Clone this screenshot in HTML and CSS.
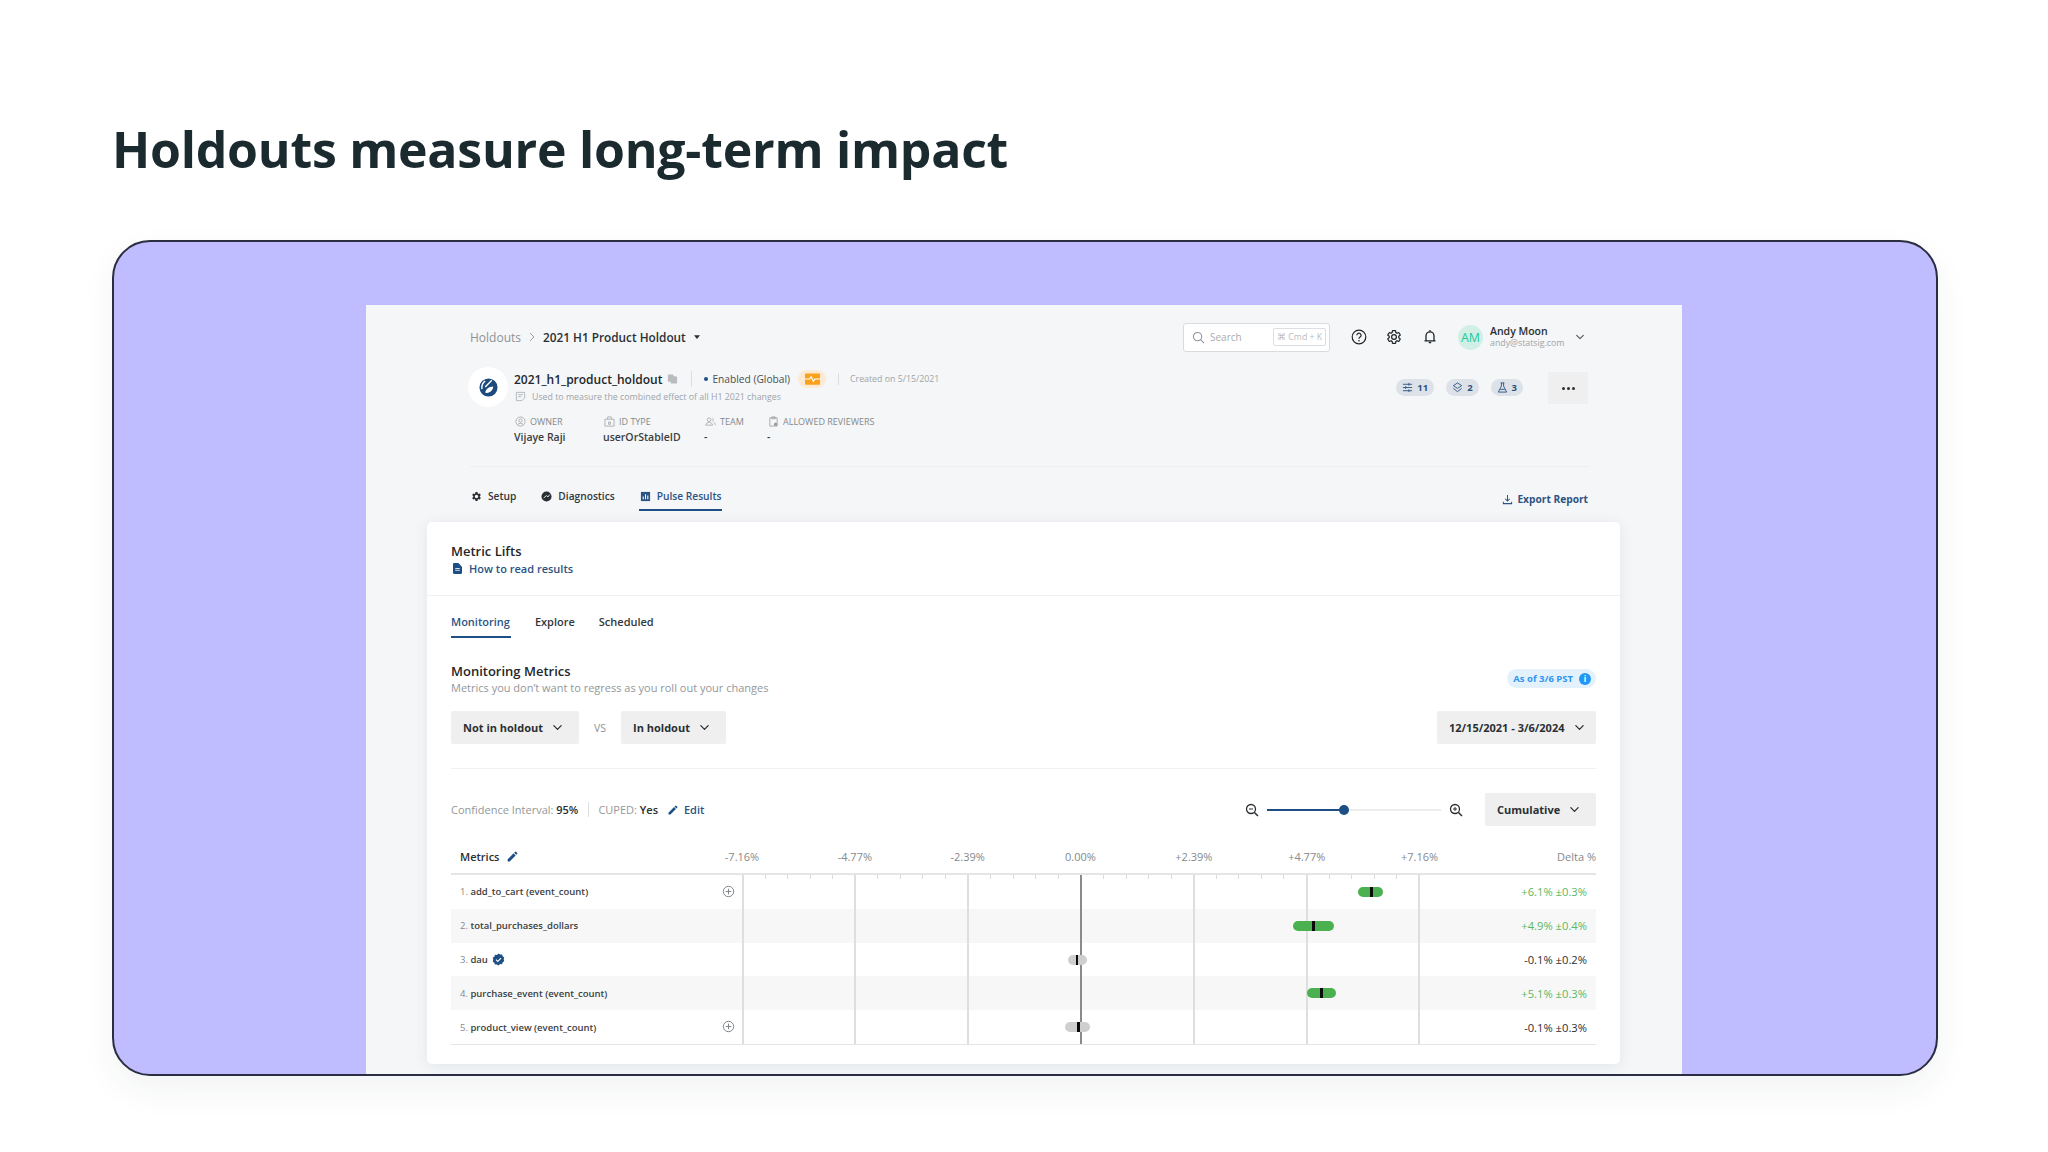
FILE: index.html
```html
<!DOCTYPE html>
<html lang="en">
<head>
<meta charset="utf-8">
<title>Holdouts measure long-term impact</title>
<link rel="stylesheet" href="styles.css">
</head>
<body>
<svg class="sprite" aria-hidden="true">
  <symbol id="chev" viewBox="0 0 12 12"><path d="M2 4l4 4 4-4" fill="none" stroke="currentColor" stroke-width="1.4" stroke-linecap="round" stroke-linejoin="round"/></symbol>
  <symbol id="gear" viewBox="0 0 24 24"><path d="M19.14 12.94c.04-.3.06-.61.06-.94 0-.32-.02-.64-.07-.94l2.03-1.58a.49.49 0 0 0 .12-.61l-1.92-3.32a.488.488 0 0 0-.59-.22l-2.39.96c-.5-.38-1.03-.7-1.62-.94l-.36-2.54a.484.484 0 0 0-.48-.41h-3.84c-.24 0-.43.17-.47.41l-.36 2.54c-.59.24-1.13.57-1.62.94l-2.39-.96c-.22-.08-.47 0-.59.22L2.74 8.87c-.12.21-.08.47.12.61l2.03 1.58c-.05.3-.09.63-.09.94s.02.64.07.94l-2.03 1.58a.49.49 0 0 0-.12.61l1.92 3.32c.12.22.37.29.59.22l2.39-.96c.5.38 1.03.7 1.62.94l.36 2.54c.05.24.24.41.48.41h3.84c.24 0 .44-.17.47-.41l.36-2.54c.59-.24 1.13-.56 1.62-.94l2.39.96c.22.08.47 0 .59-.22l1.92-3.32c.12-.22.07-.47-.12-.61l-2.01-1.58zM12 15.6c-1.98 0-3.6-1.62-3.6-3.6s1.62-3.6 3.6-3.6 3.6 1.62 3.6 3.6-1.62 3.6-3.6 3.6z"/></symbol>
  <symbol id="pencil" viewBox="0 0 24 24"><path d="M3 17.25V21h3.75L17.81 9.94l-3.75-3.75L3 17.25zM20.71 7.04a1 1 0 0 0 0-1.41l-2.34-2.34a1 1 0 0 0-1.41 0l-1.83 1.83 3.75 3.75 1.83-1.83z"/></symbol>
  <symbol id="plus" viewBox="0 0 14 14"><circle cx="7" cy="7" r="5.6" fill="none" stroke="currentColor" stroke-width="1"/><path d="M7 4v6M4 7h6" stroke="currentColor" stroke-width="1"/></symbol>
</svg>
<main class="page">
  <h1 class="title">Holdouts measure long-term impact</h1>
  <section class="frame">
    <div class="panel">
      <header class="topbar">
        <nav class="crumbs">
          <span class="crumb-root">Holdouts</span>
          <svg class="crumb-sep" viewBox="0 0 8 12"><path d="M2 2l4 4-4 4" fill="none" stroke="currentColor" stroke-width="1"/></svg>
          <span class="crumb-here">2021 H1 Product Holdout</span>
          <svg class="crumb-caret" viewBox="0 0 8 5"><path d="M0 0h8L4 5z"/></svg>
        </nav>
        <div class="search">
          <svg class="search-ico" viewBox="0 0 14 14"><circle cx="6" cy="6" r="4.500" fill="none" stroke="currentColor" stroke-width="1.100"/><path d="M9.300 9.300l3.700 3.700" stroke="currentColor" stroke-width="1.100"/></svg>
          <span class="search-text">Search</span>
          <span class="kbd">⌘ Cmd + K</span>
        </div>
        <svg class="top-ico help" viewBox="0 0 16 16"><circle cx="8" cy="8" r="6.800" fill="none" stroke="currentColor" stroke-width="1.200"/><path d="M5.900 6.300a2.100 2.100 0 1 1 3.200 1.800c-.7.500-1.100.8-1.100 1.700" fill="none" stroke="currentColor" stroke-width="1.200"/><circle cx="8" cy="11.700" r=".8" fill="currentColor"/></svg>
        <svg class="top-ico gear-line" viewBox="0 0 24 24"><use href="#gear"/></svg>
        <svg class="top-ico bell" viewBox="0 0 16 16"><path d="M4 11.500V6.800a4 4 0 0 1 8 0v4.700M2.500 11.800h11" fill="none" stroke="currentColor" stroke-width="1.300"/><path d="M6.800 13.500h2.400M8 1v1.500" stroke="currentColor" stroke-width="1.300"/></svg>
        <div class="user">
          <span class="avatar">AM</span>
          <span class="user-text"><b>Andy Moon</b><small>andy@statsig.com</small></span>
          <svg class="user-chev" viewBox="0 0 12 12"><use href="#chev"/></svg>
        </div>
      </header>

      <section class="head">
        <div class="head-main">
          <span class="logo"><svg viewBox="0 0 20 20"><circle cx="10" cy="10" r="9.500" fill="#1d4a7c"/><path d="M6 3.500c-2 1.500-3.200 4-3 7.500M13 3l-6 6" stroke="#fff" stroke-width="1.500" fill="none" stroke-linecap="round"/><path d="M6.500 15.500c.5-3.500 4-6.500 8.500-6.500-.2 3.800-3.500 7.500-8.500 6.500z" fill="#fff"/></svg></span>
          <div class="head-body">
            <div class="head-line">
              <span class="exp-name">2021_h1_product_holdout</span>
              <svg class="copy" viewBox="0 0 12 12"><path d="M1 1h6v2h3l1 1v7H4V9H1z"/></svg>
              <i class="vline first"></i>
              <span class="dot"></span>
              <span class="status">Enabled (Global)</span>
              <span class="pulse"><svg viewBox="0 0 16 12"><rect width="16" height="12" rx="1" fill="#f9a11b"/><path d="M0 6h5l1.500-2.500L9 8.500 10.500 6H16" stroke="#fff" stroke-width="1.100" fill="none"/></svg></span>
              <i class="vline second"></i>
              <span class="created">Created on 5/15/2021</span>
            </div>
            <div class="desc-line">
              <svg class="note" viewBox="0 0 12 12"><path d="M1.500 1.500h9v6l-3 3h-6zM3.500 4h5M3.500 6.200h3.500" fill="none" stroke="currentColor" stroke-width=".8"/></svg>
              <span>Used to measure the combined effect of all H1 2021 changes</span>
            </div>
            <div class="meta">
              <div class="meta-col col-owner">
                <span class="meta-label"><svg viewBox="0 0 12 12"><circle cx="6" cy="6" r="5" fill="none" stroke="currentColor" stroke-width=".8"/><circle cx="6" cy="5" r="1.800" fill="none" stroke="currentColor" stroke-width=".8"/><path d="M2.800 9.500c1.500-2 4.900-2 6.400 0" fill="none" stroke="currentColor" stroke-width=".8"/></svg>OWNER</span>
                <span class="meta-val">Vijaye Raji</span>
              </div>
              <div class="meta-col col-id">
                <span class="meta-label"><svg viewBox="0 0 12 12"><path d="M1 3.500h10V11H1zM4 3.500V1h4v2.500M5 6.500h2v2.500H5z" fill="none" stroke="currentColor" stroke-width=".8"/></svg>ID TYPE</span>
                <span class="meta-val">userOrStableID</span>
              </div>
              <div class="meta-col col-team">
                <span class="meta-label"><svg viewBox="0 0 12 12"><circle cx="4.500" cy="4" r="2" fill="none" stroke="currentColor" stroke-width=".8"/><path d="M.8 10c.5-4 7-4 7.400 0zM8 2.300a2 2 0 0 1 0 3.500M9.500 6.800c1 .5 1.600 1.600 1.700 3.200" fill="none" stroke="currentColor" stroke-width=".8"/></svg>TEAM</span>
                <span class="meta-val">-</span>
              </div>
              <div class="meta-col">
                <span class="meta-label"><svg viewBox="0 0 12 12"><path d="M2 2h8v9H2zM4.200 1h3.600v2H4.200z" fill="none" stroke="currentColor" stroke-width=".9"/><circle cx="8.300" cy="9" r="1.800" fill="currentColor"/></svg>ALLOWED REVIEWERS</span>
                <span class="meta-val">-</span>
              </div>
            </div>
          </div>
        </div>
        <div class="head-side">
          <span class="count"><svg viewBox="0 0 12 12"><path d="M1 2.500h10M1 6h10M1 9.500h10M7.500 1v3M4 4.500v3M7.500 8v3" fill="none" stroke="currentColor" stroke-width="1"/></svg>11</span>
          <span class="count"><svg viewBox="0 0 12 12"><path d="M6 1l4.500 3L6 7 1.500 4zM1.500 7L6 10.500 10.500 7" fill="none" stroke="currentColor" stroke-width="1"/></svg>2</span>
          <span class="count"><svg viewBox="0 0 12 12"><path d="M4 1h4M4.800 1v3.500L1.500 11h9L7.200 4.500V1M3.500 8h5" fill="none" stroke="currentColor" stroke-width="1"/></svg>3</span>
          <span class="more"><i></i><i></i><i></i></span>
        </div>
      </section>

      <nav class="tabs">
        <span class="tab"><svg viewBox="0 0 24 24"><use href="#gear"/></svg>Setup</span>
        <span class="tab"><svg viewBox="0 0 12 12"><circle cx="6" cy="6" r="5.500"/><path d="M3 7.500L6 5l1.500 1.500L9.500 4" stroke="#f4f6f8" fill="none" stroke-width="1"/></svg>Diagnostics</span>
        <span class="tab tab-on"><svg viewBox="0 0 12 12"><path d="M1 1h10v10H1z"/><path d="M3.500 9V6M6 9V3.500M8.500 9V5" stroke="#f4f6f8" stroke-width="1.200"/></svg>Pulse Results</span>
        <span class="export"><svg viewBox="0 0 12 12"><path d="M6 1v6.500M3.500 5.200L6 7.700l2.500-2.500M1.500 8.500v2h9v-2" fill="none" stroke="currentColor" stroke-width="1.100"/></svg>Export Report</span>
      </nav>

      <article class="card">
        <header class="card-head">
          <h2 class="card-title">Metric Lifts</h2>
          <a class="doc-link"><svg viewBox="0 0 10 12"><path d="M0 1.200C0 .5.500 0 1.200 0H6l4 4v6.800c0 .7-.5 1.200-1.200 1.200H1.200C.5 12 0 11.500 0 10.800z"/><path d="M2.500 6h5M2.500 8h5" stroke="#fff" stroke-width=".9"/></svg>How to read results</a>
        </header>
        <div class="card-body">
          <nav class="subtabs">
            <span class="subtab subtab-on">Monitoring</span>
            <span class="subtab">Explore</span>
            <span class="subtab">Scheduled</span>
          </nav>
          <div class="section-head">
            <div>
              <h3 class="section-title">Monitoring Metrics</h3>
              <p class="section-desc">Metrics you don’t want to regress as you roll out your changes</p>
            </div>
            <span class="asof">As of 3/6 PST<i class="info">i</i></span>
          </div>
          <div class="selects">
            <span class="select sel-a">Not in holdout<svg viewBox="0 0 12 12"><use href="#chev"/></svg></span>
            <span class="vs">VS</span>
            <span class="select sel-b">In holdout<svg viewBox="0 0 12 12"><use href="#chev"/></svg></span>
            <span class="select sel-date">12/15/2021 - 3/6/2024<svg viewBox="0 0 12 12"><use href="#chev"/></svg></span>
          </div>
          <div class="controls">
            <span class="ci">Confidence Interval: <b>95%</b></span>
            <i class="ci-sep"></i>
            <span class="ci">CUPED: <b>Yes</b></span>
            <a class="edit"><svg viewBox="0 0 24 24"><use href="#pencil"/></svg>Edit</a>
            <div class="zoomer">
              <svg class="zoom-ico" viewBox="0 0 14 14"><circle cx="6" cy="6" r="4.500" fill="none" stroke="currentColor" stroke-width="1.300"/><path d="M9.500 9.500l3.500 3.500" stroke="currentColor" stroke-width="1.500"/><path d="M4 6h4" stroke="currentColor" stroke-width="1"/></svg>
              <span class="track"><span class="track-fill"></span><span class="knob"></span></span>
              <svg class="zoom-ico" viewBox="0 0 14 14"><circle cx="6" cy="6" r="4.500" fill="none" stroke="currentColor" stroke-width="1.300"/><path d="M9.500 9.500l3.500 3.500" stroke="currentColor" stroke-width="1.500"/><path d="M4 6h4M6 4v4" stroke="currentColor" stroke-width="1"/></svg>
            </div>
            <span class="select sel-cum">Cumulative<svg viewBox="0 0 12 12"><use href="#chev"/></svg></span>
          </div>

          <div class="table">
            <div class="thead">
              <span class="th-metrics">Metrics<svg viewBox="0 0 24 24"><use href="#pencil"/></svg></span>
              <div class="axis">
                <span>-7.16%</span><span>-4.77%</span><span>-2.39%</span><span>0.00%</span><span>+2.39%</span><span>+4.77%</span><span>+7.16%</span>
              </div>
              <span class="th-delta">Delta %</span>
            </div>
            <div class="tbody">
              <div class="row">
                <span class="metric"><em>1.</em> add_to_cart (event_count)<svg class="add" viewBox="0 0 14 14"><use href="#plus"/></svg></span>
                <div class="lane"><span class="ci-bar up" style="left:616px;width:25px"><i style="left:12px"></i></span></div>
                <span class="delta pos">+6.1% ±0.3%</span>
              </div>
              <div class="row">
                <span class="metric"><em>2.</em> total_purchases_dollars</span>
                <div class="lane"><span class="ci-bar up" style="left:550.500px;width:41px"><i style="left:19.500px"></i></span></div>
                <span class="delta pos">+4.9% ±0.4%</span>
              </div>
              <div class="row">
                <span class="metric"><em>3.</em> dau<svg class="verified" viewBox="0 0 14 14"><path d="M7 .5l1.700 1.200 2.100-.1.700 2 1.700 1.200-.6 2 .6 2-1.700 1.200-.7 2-2.100-.1L7 13.500l-1.700-1.200-2.100.1-.7-2L.8 9.200l.6-2-.6-2 1.700-1.200.7-2 2.100.1z" fill="#1d4f85"/><path d="M4.300 7.200l1.900 1.800 3.500-3.600" fill="none" stroke="#fff" stroke-width="1.200"/></svg></span>
                <div class="lane"><span class="ci-bar flat" style="left:325.500px;width:19px"><i style="left:8px"></i></span></div>
                <span class="delta">-0.1% ±0.2%</span>
              </div>
              <div class="row">
                <span class="metric"><em>4.</em> purchase_event (event_count)</span>
                <div class="lane"><span class="ci-bar up" style="left:565px;width:28.500px"><i style="left:13px"></i></span></div>
                <span class="delta pos">+5.1% ±0.3%</span>
              </div>
              <div class="row">
                <span class="metric"><em>5.</em> product_view (event_count)<svg class="add" viewBox="0 0 14 14"><use href="#plus"/></svg></span>
                <div class="lane"><span class="ci-bar flat" style="left:323px;width:25px"><i style="left:12px"></i></span></div>
                <span class="delta">-0.1% ±0.3%</span>
              </div>
              <div class="plot">
                <i></i><i></i><i></i><i class="zero"></i><i></i><i></i><i></i>
              </div>
            </div>
          </div>
        </div>
      </article>
    </div>
  </section>
</main>
</body>
</html>
```

FILE: styles.css
```css
* { box-sizing: border-box; }
html, body { margin: 0; padding: 0; background: #fff; }
body { font-family: "Open Sans", "Liberation Sans", sans-serif; color: #2b2f33; }
svg { display: block; flex: none; }
i, em { font-style: normal; }
h1, h2, h3, p { margin: 0; }
.sprite { display: none; }

.page { width: 2048px; height: 1152px; overflow: hidden; padding: 0 110px 0 112px; }
.title { height: 240px; padding: 116px 0 0; font-size: 50px; letter-spacing: -.25px; line-height: 66px; font-weight: 700; color: #1b2a2e; }

.frame { height: 836px; border: 2px solid #2b2e40; border-radius: 38px; background: #bfbcff; padding-top: 63px; display: flex; flex-direction: column; overflow: hidden; box-shadow: 0 14px 34px rgba(40, 50, 60, .06); }
.panel { flex: 1; width: 1316px; margin: 0 auto 0 252px; background: #f4f6f8; padding: 0 62px 0 61px; overflow: hidden; }

.topbar { height: 65px; margin: 0 28px 0 43px; display: flex; align-items: center; padding-bottom: 1px; }
.crumbs { display: flex; align-items: center; font-size: 12px; flex: 1; }
.crumb-root { color: #8f9397; }
.crumb-sep { width: 8px; height: 12px; margin: 0 7px; color: #9a9da0; }
.crumb-here { font-size: 11.800px; font-weight: 600; color: #2b2f33; }
.crumb-caret { width: 6px; height: 4px; margin-left: 8px; fill: #2b2f33; }

.search { width: 147px; height: 29px; background: #fff; border: 1px solid #d9dcdf; border-radius: 3px; display: flex; align-items: center; padding: 0 3px 0 8px; font-size: 10px; color: #a9adb0; margin-right: 21px; }
.search-ico { width: 13px; height: 13px; color: #8f9397; margin-right: 5px; }
.search-text { flex: 1; }
.kbd { font-size: 8.700px; border: 1px solid #dcdfe1; border-radius: 2px; padding: 2px 3px; color: #b9bcbe; white-space: nowrap; }
.top-ico { width: 16px; height: 16px; color: #1f2427; }
.help { margin-right: 19px; }
.gear-line { fill: none; stroke: #1f2427; stroke-width: 1.800px; margin-right: 20px; }
.bell { margin-right: 20px; }
.user { display: flex; align-items: center; }
.avatar { width: 25px; height: 25px; border-radius: 50%; background: #d2efe6; color: #1fc79a; font-size: 12.500px; display: flex; align-items: center; justify-content: center; margin-right: 7px; }
.user-text { display: flex; flex-direction: column; line-height: 12px; width: 85px; }
.user-text b { font-size: 10.500px; font-weight: 600; }
.user-text small { font-size: 8.800px; color: #a1a5a8; }
.user-chev { width: 10px; height: 10px; color: #565a5e; margin-right: 7px; }

.head { margin: 1px 30px 0 43px; padding-bottom: 21px; border-bottom: 1px solid #eceef0; display: flex; justify-content: space-between; }
.head-main { display: flex; }
.logo { width: 40px; height: 40px; margin: -4px 6px 0 -2px; border-radius: 50%; background: #fff; display: flex; align-items: center; justify-content: center; }
.logo svg { width: 19px; height: 19px; }
.head-line { height: 18px; display: flex; align-items: center; margin-top: -1px; }
.exp-name { font-size: 12px; font-weight: 600; color: #23272a; }
.copy { width: 11px; height: 12px; fill: #b9bcbe; margin-left: 5px; }
.vline { width: 1px; height: 16px; background: #dcdfe1; }
.vline.first { margin: 0 12px 0 13px; }
.vline.second { height: 12px; margin: 0 11px 0 12px; }
.dot { width: 4px; height: 4px; border-radius: 50%; background: #1d4f85; margin-right: 4px; }
.status { font-size: 10.200px; color: #4a4e52; }
.pulse { width: 28px; height: 18px; border-radius: 9px; background: #fcebd2; display: flex; align-items: center; justify-content: center; margin-left: 8px; }
.pulse svg { width: 15px; height: 12px; }
.created { font-size: 8.800px; color: #a1a5a8; }
.desc-line { height: 17px; display: flex; align-items: center; font-size: 8.800px; color: #a1a5a8; }
.note { width: 11px; height: 11px; margin: 0 6px 0 1px; }
.meta { display: flex; margin-top: 9px; }
.meta-col { display: flex; flex-direction: column; }
.col-owner { width: 89px; }
.col-id { width: 101px; }
.col-team { width: 63px; }
.meta-label { height: 14px; display: flex; align-items: center; font-size: 9px; color: #85898c; padding-left: 1px; }
.meta-label svg { width: 11px; height: 11px; margin-right: 4px; color: #9b9ea1; }
.meta-val { height: 16px; margin-top: 1px; font-size: 10.500px; line-height: 16px; font-weight: 600; color: #3a3e42; }
.head-side { display: flex; align-items: flex-start; padding-right: 2px; }
.count { height: 17px; margin: 8px 12px 0 0; padding: 0 6px; border-radius: 9px; background: #dde2e9; display: flex; align-items: center; font-size: 9.500px; font-weight: 700; color: #2c5384; }
.count svg { width: 11px; height: 11px; margin-right: 4px; }
.more { width: 40px; height: 32px; margin: 1px 0 0 13px; background: #efefef; border-radius: 2px; display: flex; align-items: center; justify-content: center; gap: 2px; }
.more i { width: 3px; height: 3px; border-radius: 50%; background: #2b2f33; }

.tabs { height: 55px; margin: 0 32px 0 43px; display: flex; align-items: flex-start; padding-top: 19px; font-size: 10.200px; }
.tab { height: 25px; padding: 0 1px 3px 1px; margin-right: 23px; display: flex; align-items: center; border-bottom: 2px solid transparent; font-weight: 600; color: #33373b; }
.tab svg { width: 11px; height: 11px; margin-right: 6px; fill: #2b2f33; }
.tab-on { color: #2c5384; border-bottom-color: #1d4f85; margin-right: 0; }
.tab-on svg { fill: #2c5384; }
.export { margin: 6px 0 0 auto; display: flex; align-items: center; font-weight: 700; color: #2c5384; }
.export svg { width: 11px; height: 11px; margin-right: 4px; }

.card { background: #fff; border-radius: 5px; height: 542px; box-shadow: 0 2px 14px rgba(60, 70, 80, .09); }
.card-head { height: 74px; padding: 20px 24px 0; border-bottom: 1px solid #eef0f1; }
.card-title { font-size: 13px; line-height: 18px; font-weight: 600; color: #23272a; }
.doc-link { height: 16px; display: flex; align-items: center; font-size: 11px; font-weight: 600; color: #2c5384; padding-left: 2px; }
.doc-link svg { width: 9px; height: 11px; margin-right: 7px; fill: #1d4f85; }
.card-body { padding: 0 24px; }

.subtabs { display: flex; gap: 24px; padding-top: 17px; font-size: 11px; }
.subtab { height: 25px; line-height: 18px; font-weight: 600; color: #33373b; }
.subtab-on { color: #2c5384; border-bottom: 2px solid #1d4f85; padding: 0 1px 5px 0; }

.section-head { margin-top: 24px; height: 34px; display: flex; justify-content: space-between; align-items: flex-start; }
.section-title { font-size: 13px; line-height: 18px; font-weight: 600; color: #23272a; }
.section-desc { font-size: 11px; line-height: 16px; color: #93979a; }
.asof { margin-top: 7px; height: 19px; padding: 0 5px 0 6px; border-radius: 10px; background: #e3f1fd; display: flex; align-items: center; font-size: 9.500px; font-weight: 700; color: #2e96f0; }
.info { width: 12px; height: 12px; margin-left: 6px; border-radius: 50%; background: #2196f3; color: #fff; font-size: 8px; font-weight: 700; line-height: 12px; text-align: center; }

.selects { margin-top: 15px; padding-bottom: 24px; border-bottom: 1px solid #f0f1f2; display: flex; align-items: center; }
.select { height: 33px; padding: 0 16px 0 12px; border-radius: 2px; background: #efefef; display: flex; align-items: center; justify-content: space-between; font-size: 11px; font-weight: 700; color: #2b2f33; }
.select svg { width: 11px; height: 11px; }
.sel-a { width: 128px; }
.sel-b { width: 105px; }
.sel-date { width: 159px; margin-left: auto; padding-right: 11px; }
.sel-cum { width: 111px; }
.vs { width: 42px; text-align: center; font-size: 10.500px; color: #8f9397; }

.controls { margin-top: 24px; height: 33px; display: flex; align-items: center; font-size: 11px; color: #93979a; }
.ci b { font-weight: 600; color: #2b2f33; }
.ci-sep { width: 1px; height: 15px; background: #dcdfe1; margin: 0 9px 0 10px; }
.edit { margin-left: 9px; display: flex; align-items: center; font-weight: 600; color: #2c5384; }
.edit svg { width: 12px; height: 12px; margin-right: 5px; fill: #1d4f85; }
.zoomer { margin-left: auto; margin-right: 22px; display: flex; align-items: center; gap: 8px; }
.zoom-ico { width: 14px; height: 14px; color: #2b2f33; }
.track { position: relative; width: 174px; height: 2px; background: #ececec; display: block; }
.track-fill { position: absolute; left: 0; top: 0; width: 76px; height: 2px; background: #1d4f85; }
.knob { position: absolute; left: 72px; top: -4px; width: 10px; height: 10px; border-radius: 50%; background: #1d4f85; }

.table { margin-top: 14px; font-size: 9.500px; }
.thead { height: 35px; display: grid; grid-template-columns: 291px 677px 1fr; align-items: center; border-bottom: 2px solid #e4e5e6; position: relative; font-size: 11px; color: #85898c; }
.th-metrics { display: flex; align-items: center; padding-left: 9px; font-size: 11px; font-weight: 600; color: #2b2f33; }
.th-metrics svg { width: 13px; height: 13px; margin-left: 7px; fill: #1d4f85; }
.axis { display: flex; justify-content: space-between; margin: 0 -18px; }
.axis span { width: 36px; text-align: center; white-space: nowrap; }
.th-delta { text-align: right; }

.tbody { position: relative; border-bottom: 1px solid #e4e5e6; }
.row { height: 33.800px; display: grid; grid-template-columns: 291px 677px 1fr; align-items: center; }
.row:nth-child(even) { background: #f7f7f7; }
.metric { display: flex; align-items: center; padding-left: 9px; font-weight: 600; color: #3a3e42; white-space: pre; position: relative; height: 100%; }
.metric em { font-weight: 400; color: #85898c; }
.add { position: absolute; right: 7px; top: 10px; width: 13px; height: 13px; color: #7a7e82; }
.verified { width: 13px; height: 13px; margin-left: 4px; }
.lane { position: relative; height: 100%; }
.ci-bar { position: absolute; top: 12px; height: 10px; border-radius: 5px; z-index: 1; }
.ci-bar i { position: absolute; top: 0; width: 2.500px; height: 10px; background: #0b0b0b; }
.up { background: #4bb050; }
.flat { background: #cfcfcf; }
.delta { padding-right: 9px; text-align: right; font-size: 11.200px; color: #2b2f33; }
.pos { color: #5cb860; }
.plot { position: absolute; left: 290.500px; width: 679px; top: 0; bottom: 0; display: flex; justify-content: space-between; background: repeating-linear-gradient(90deg, #dcdcdc 0 1px, transparent 1px 22.560px) 0 0 / 100% 4px no-repeat; }
.plot i { width: 2px; background: #dedede; }
.plot .zero { background: #8a8a8a; }
```
